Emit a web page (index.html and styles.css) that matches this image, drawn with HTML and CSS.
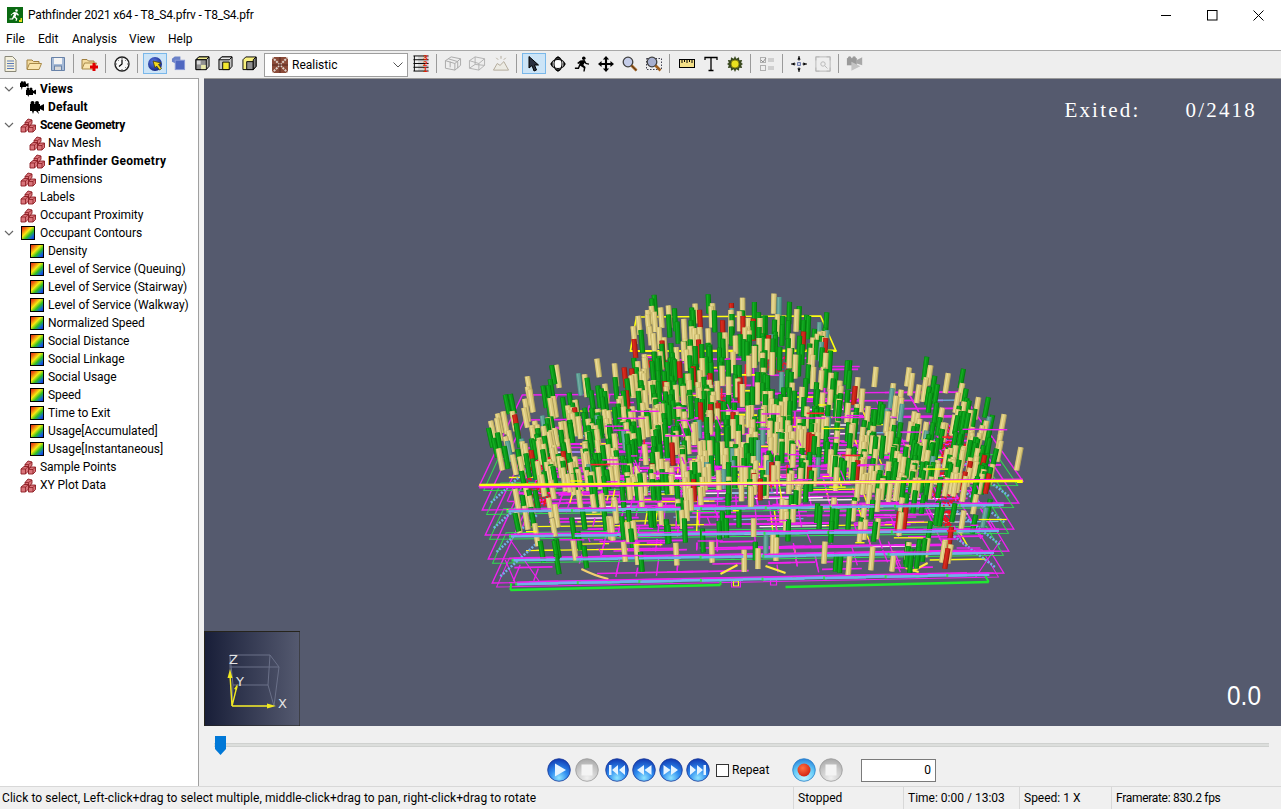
FILE: index.html
```html
<!DOCTYPE html>
<html lang="en">
<head>
<meta charset="utf-8">
<title>Pathfinder 2021 x64 - T8_S4.pfrv - T8_S4.pfr</title>
<link rel="stylesheet" href="styles.css">
</head>
<body>
<svg class="defs" width="0" height="0" aria-hidden="true">
  <defs>
    <linearGradient id="rainbow" x1="0" y1="0" x2="1" y2="1">
      <stop offset="0" stop-color="#e01010"/><stop offset=".22" stop-color="#f07010"/><stop offset=".42" stop-color="#f8e810"/><stop offset=".62" stop-color="#30c020"/><stop offset=".82" stop-color="#1060e0"/><stop offset="1" stop-color="#2020c0"/>
    </linearGradient>
    <radialGradient id="orbBlue" cx=".5" cy=".85" r=".85">
      <stop offset="0" stop-color="#8fe4ff"/><stop offset=".45" stop-color="#2f8df0"/><stop offset="1" stop-color="#1038b0"/>
    </radialGradient>
    <radialGradient id="orbGray" cx=".5" cy=".85" r=".85">
      <stop offset="0" stop-color="#f0f0f0"/><stop offset=".6" stop-color="#c8c8c8"/><stop offset="1" stop-color="#a8a8a8"/>
    </radialGradient>
    <radialGradient id="orbCyan" cx=".5" cy=".85" r=".85">
      <stop offset="0" stop-color="#c0f4ff"/><stop offset=".6" stop-color="#60c8f8"/><stop offset="1" stop-color="#2a80d8"/>
    </radialGradient>
    <radialGradient id="recRed" cx=".4" cy=".35" r=".7">
      <stop offset="0" stop-color="#ff7040"/><stop offset="1" stop-color="#d02010"/>
    </radialGradient>
    <radialGradient id="ballBlue" cx=".4" cy=".35" r=".7">
      <stop offset="0" stop-color="#5a7ae8"/><stop offset="1" stop-color="#10207a"/>
    </radialGradient>

    <symbol id="i-brick" viewBox="0 0 16 16">
      <g fill="#d8747a" stroke="#8c1c22" stroke-width=".9">
        <path d="M5 5.500 8 2l4 1v3.500l-3.500 3H5z"/>
        <path d="M1 10 4 7.500H8.500V12l-3 3H1z"/>
        <path d="M8.500 10.500 11 8h4.500v4.500L13 15H8.500z"/>
      </g>
      <g fill="none" stroke="#8c1c22" stroke-width=".8">
        <path d="M5 5.500h3.500v3M8.500 5.500 12 3M1 10h4.500v5M5.500 10l3-2.500M8.500 10.500h4.500V15M13 10.500 15.500 8"/>
      </g>
    </symbol>
    <symbol id="i-contour" viewBox="-1 -1 16 16">
      <rect x=".5" y=".5" width="13" height="13" fill="url(#rainbow)" stroke="#000"/>
    </symbol>
    <symbol id="i-cam" viewBox="0 0 16 16">
      <rect x="1" y="5" width="10" height="7" fill="#000"/><circle cx="3.500" cy="4" r="2" fill="#000"/><circle cx="8" cy="4" r="2" fill="#000"/><path d="M11 7l4-2v7l-4-2zM3 12h2l-1 3zM7 12h2l1 3z" fill="#000"/>
    </symbol>
    <symbol id="i-cams" viewBox="0 0 16 16">
      <g fill="#000"><rect x="0" y="2" width="6" height="4"/><circle cx="2" cy="1.500" r="1.300"/><circle cx="4.500" cy="1.500" r="1.300"/><path d="M6 3l2.500-1v4L6 5zM1 6h1.500l-.7 3z"/><rect x="6" y="9" width="7" height="5"/><circle cx="8" cy="8" r="1.500"/><circle cx="11" cy="8" r="1.500"/><path d="M13 10l3-1.500v5L13 12zM7.500 14H9l-.7 2z"/></g>
    </symbol>
    <symbol id="i-app" viewBox="0 0 16 16">
      <rect width="16" height="16" fill="#0a6a12"/>
      <path d="M9.500 2.200a1.300 1.300 0 1 1 0 2.600 1.300 1.300 0 0 1 0-2.600zM7 5l3 .5 2 2.500-1 .7-1.500-1.500-1 2.500 2 2-1 2.300-1-.3.500-1.700-2-1.500-1 2H2.500v-1h2.500L7 7H5.500L4.500 8.500l-1-.5z" fill="#fff"/>
      <path d="M12 15v-2h1.500v-2H15v4z" fill="#e8e020"/>
    </symbol>
    <symbol id="g-new" viewBox="0 0 16 16"><path d="M3 .5h7.500L14 4v11.500H3z" fill="#f4f0dc" stroke="#8a8878"/><path d="M5 5h7M5 7.500h7M5 10h7M5 12.500h7" stroke="#5a7ab8"/></symbol>
    <symbol id="g-open" viewBox="0 0 16 16"><path d="M1 13V4h5l1.500 1.500H13V8" fill="#f4dca0" stroke="#a08040"/><path d="M1 13.500 3.500 7.500h12L13 13.500z" fill="#fae6b0" stroke="#a88a48"/></symbol>
    <symbol id="g-save" viewBox="0 0 16 16"><path d="M1.500 1.500h13v13h-13z" fill="#a8bcd8" stroke="#6882a8"/><rect x="4" y="2" width="8" height="6" fill="#f4f4f4"/><rect x="4.500" y="10" width="7" height="4.500" fill="#d8d8d8" stroke="#6882a8"/></symbol>
    <symbol id="g-openplus" viewBox="0 0 18 16"><path d="M1 13V4h5l1.500 1.500H13V8" fill="#f4dca0" stroke="#a08040"/><path d="M1 13.500 3.500 7.500h12L13 13.500z" fill="#fae6b0" stroke="#a88a48"/><path d="M11.500 9h3v2.500H17v3h-2.500V17h-3v-2.500H9v-3h2.500z" fill="#e00000" transform="translate(0 -1.500)"/></symbol>
    <symbol id="g-clock" viewBox="0 0 16 16"><circle cx="8" cy="8" r="7" fill="#f8f8f8" stroke="#222" stroke-width="1.400"/><path d="M8 3.500V8l-3 2.500" fill="none" stroke="#000" stroke-width="1.200"/><path d="M8 2v1M14 8h-1M8 14v-1M2 8h1M12 4l-.7.7M12 12l-.7-.7M4 4l.7.7" stroke="#555"/></symbol>
    <symbol id="g-ball" viewBox="0 0 16 16"><circle cx="8" cy="8" r="7" fill="url(#ballBlue)"/><path d="M6 5l8 2-2.500 1.500 3 4-2 1.500-3-4L8 12z" fill="#f4d820" stroke="#403810" stroke-width=".8"/></symbol>
    <symbol id="g-cubeblue" viewBox="0 0 16 16"><path d="M1 3l3-2.500h6L10 6 5 8 1 6z" fill="#6b82c8"/><rect x="4.500" y="4.500" width="10" height="10" fill="#5068c0" stroke="#8a9ad8"/></symbol>
    <symbol id="g-cubeA" viewBox="0 0 16 16"><path d="M1 4 4 1h11v10l-3 3.500H1z" fill="#b0b0b0" stroke="#000"/><path d="M1 4l3-3h11l-3 3z" fill="#f0ec90" stroke="#000"/><path d="M1 4h11v10.500H1z" fill="#909090" stroke="#000"/><path d="M2 5h4v4H2z" fill="#d8d8d8"/><path d="M6.500 9.500H11.500V14H6.500z" fill="#e8e8a8"/></symbol>
    <symbol id="g-cubeB" viewBox="0 0 16 16"><path d="M1 4 4 1h11v10l-3 3.500H1z" fill="#c0c0c0" stroke="#000"/><path d="M1 4l3-3h11l-3 3z" fill="#e8e8e8" stroke="#000"/><path d="M5 6.500h7v8H5z" fill="#f4e830" stroke="#000"/></symbol>
    <symbol id="g-cubeC" viewBox="0 0 16 16"><path d="M1 4 4 1h11v10l-3 3.500H1z" fill="#f8f080" stroke="#000"/><path d="M5 6h7v8.500H5z" fill="#909090" stroke="#000"/><path d="M12 4l3-3v10l-3 3.500z" fill="#808080" stroke="#000"/></symbol>
    <symbol id="g-swatch" viewBox="0 0 16 16"><rect width="16" height="16" fill="#8a4a38"/><path d="M0 0l16 16M16 0 0 16" stroke="#e0d4cc" stroke-width="2" stroke-dasharray="2 1"/><path d="M8 0v16M0 8h16" stroke="#5a2a20"/></symbol>
    <symbol id="g-ladder" viewBox="0 0 18 18"><rect x="6" y="1" width="11" height="16" fill="#d4d4d4"/><path d="M1 1h16M1 5h16M1 9h16M1 13h16M1 17h16M2 1v16" stroke="#000" fill="none"/></symbol>
    <symbol id="g-wire" viewBox="0 0 18 18"><g fill="none" stroke="#a8a8a8"><path d="M1 6l6-4 10 2v7l-6 5-10-2z"/><path d="M1 6l10 3 6-5M11 9v7M4 4l10 3M6 13V7M14 7v7"/></g></symbol>
    <symbol id="g-wire2" viewBox="0 0 18 18"><g fill="none" stroke="#b0b0b0"><path d="M1 6l6-4 10 2v7l-6 5-10-2z"/><path d="M1 6l10 3 6-5M11 9v7M7 2v8l-6 4M7 10l10 1"/></g></symbol>
    <symbol id="g-light" viewBox="0 0 18 18"><g fill="none" stroke="#b0a898"><path d="M1 16l4-7 3 2 4-4 5 9z" fill="#ecebe4"/><path d="M9 1v3M4 3l2 2M14 3l-2 2"/></g></symbol>
    <symbol id="g-arrow" viewBox="0 0 16 16"><path d="M3 .5v11.500l3-2.500 2 5.500 2.500-1-2-5H12.500z" fill="#2a3040" stroke="#000"/></symbol>
    <symbol id="g-orbit" viewBox="0 0 18 18"><g fill="none" stroke="#000" stroke-width="1.200"><ellipse cx="9" cy="9" rx="7.500" ry="5" fill="#fff"/><ellipse cx="9" cy="9" rx="4.500" ry="7.500"/></g><path d="M9 0 6 3h6zM9 18l-3-3h6zM0 9l3-2.500v5zM18 9l-3-2.500v5z" fill="#000"/></symbol>
    <symbol id="g-run" viewBox="0 0 18 18"><circle cx="11" cy="2.500" r="2" fill="#000"/><path d="M7 5l5-.5 2 3.500 3 .5-.3 1.300L13 9l-1-1.500L10.500 10l2.500 2.500-1 5h-1.500l.5-4L7 11l-1.500 3.500H1v-1.500h3.500L6.500 8 5 9 3.500 8z" fill="#000"/></symbol>
    <symbol id="g-move" viewBox="0 0 18 18"><path d="M9 0l3.500 4H10.200v3.800H14V5.500l4 3.500-4 3.500v-2.300h-3.800V14h2.300L9 18l-3.500-4h2.300v-3.800H4v2.300L0 9l4-3.500v2.300h3.800V4H5.500z" fill="#000"/></symbol>
    <symbol id="g-zoom" viewBox="0 0 16 16"><circle cx="6" cy="6" r="4.800" fill="#c4cce8" stroke="#404040" stroke-width="1.300"/><path d="M9.500 9.500l5 5" stroke="#a06020" stroke-width="2.600"/><path d="M9.500 9.500l5 5" stroke="#202020" stroke-width=".6"/></symbol>
    <symbol id="g-zoomr" viewBox="0 0 16 16"><rect x=".5" y="2.500" width="15" height="11" fill="none" stroke="#404050" stroke-dasharray="1.500 1.500"/><circle cx="6" cy="6" r="4.800" fill="#a8b0d0" stroke="#404040" stroke-width="1.300"/><path d="M9.500 9.500l5 5" stroke="#a06020" stroke-width="2.600"/></symbol>
    <symbol id="g-ruler" viewBox="0 0 16 9"><rect x=".5" y=".5" width="15" height="8" fill="#f4e088" stroke="#000"/><path d="M3 1v3M5.500 1v2M8 1v3M10.500 1v2M13 1v3" stroke="#000"/></symbol>
    <symbol id="g-t" viewBox="0 0 16 16"><path d="M2 4V1.500h12V4M8 1.500v13M5.500 14.500h5" fill="none" stroke="#000" stroke-width="1.300"/></symbol>
    <symbol id="g-sun" viewBox="0 0 18 18"><path d="M9 0l1.500 3 3-1.500.3 3.200 3.200-.2L16 7.500 18 9l-2 1.500 1 3-3.200-.2-.3 3.200-3-1.500L9 18l-1.500-3-3 1.500-.3-3.200-3.200.2 1-3L0 9l2-1.500-1-3 3.200.2.300-3.200 3 1.500z" fill="#3a4a20"/><circle cx="9" cy="9" r="4.500" fill="#e8e020" stroke="#807810"/></symbol>
    <symbol id="g-check" viewBox="0 0 16 16"><g fill="none" stroke="#b0b0b0"><rect x="1.500" y="1.500" width="5" height="5"/><rect x="1.500" y="9.500" width="5" height="5"/><path d="M9 3h6M9 5h6M9 11h6M9 13h6"/></g><path d="M2 4l2 2 3-4" stroke="#909090" fill="none"/></symbol>
    <symbol id="g-cross" viewBox="0 0 18 18"><path d="M9 0v5M9 13v5M0 9h5M13 9h5" stroke="#000" stroke-width="1.200"/><path d="M9 1l-2 3h4zM9 17l-2-3h4zM1 9l3-2v4zM17 9l-3-2v4z" fill="#000"/><rect x="7.500" y="7.500" width="3" height="3" fill="none" stroke="#5060a0"/></symbol>
    <symbol id="g-frame" viewBox="0 0 18 18"><g fill="none" stroke="#b4b4b4"><path d="M1 5V1h4M13 1h4v4M17 13v4h-4M5 17H1v-4"/><rect x="1" y="1" width="16" height="16"/><circle cx="9" cy="9" r="2.500"/><path d="M11 11l3 3"/></g></symbol>
    <symbol id="g-camoff" viewBox="0 0 20 18"><rect x="1" y="3" width="11" height="8" fill="#9a9a9a"/><circle cx="4" cy="3" r="2" fill="#9a9a9a"/><circle cx="9" cy="3" r="2" fill="#9a9a9a"/><path d="M12 5l6-3v9l-6-2z" fill="#a8a8a8"/><path d="M6 7l10 5-10 5z" fill="#c4c4c4"/></symbol>

    <symbol id="o-play" viewBox="0 0 24 24"><circle cx="12" cy="12" r="11.300" fill="url(#orbBlue)" stroke="#1a3a98" stroke-width=".8"/><path d="M8 5.500 19 12 8 18.500z" fill="#e6f4ff"/></symbol>
    <symbol id="o-stop" viewBox="0 0 24 24"><circle cx="12" cy="12" r="11.300" fill="url(#orbGray)" stroke="#9a9a9a" stroke-width=".8"/><rect x="6.500" y="6.500" width="11" height="11" fill="#f4f4f4"/></symbol>
    <symbol id="o-first" viewBox="0 0 24 24"><circle cx="12" cy="12" r="11.300" fill="url(#orbBlue)" stroke="#1a3a98" stroke-width=".8"/><path d="M4 7h2.500v10H4zM7 12l6-5v10zM14 12l6-5v10z" fill="#e6f4ff"/></symbol>
    <symbol id="o-prev" viewBox="0 0 24 24"><circle cx="12" cy="12" r="11.300" fill="url(#orbBlue)" stroke="#1a3a98" stroke-width=".8"/><path d="M5 12l7-5v10zM12.500 12l7-5v10z" fill="#e6f4ff"/></symbol>
    <symbol id="o-next" viewBox="0 0 24 24"><circle cx="12" cy="12" r="11.300" fill="url(#orbBlue)" stroke="#1a3a98" stroke-width=".8"/><path d="M19 12l-7-5v10zM11.500 12l-7-5v10z" fill="#e6f4ff"/></symbol>
    <symbol id="o-last" viewBox="0 0 24 24"><circle cx="12" cy="12" r="11.300" fill="url(#orbBlue)" stroke="#1a3a98" stroke-width=".8"/><path d="M20 7h-2.500v10H20zM17 12l-6-5v10zM10 12l-6-5v10z" fill="#e6f4ff"/></symbol>
    <symbol id="o-rec" viewBox="0 0 24 24"><circle cx="12" cy="12" r="11.300" fill="url(#orbCyan)" stroke="#2a80c8" stroke-width=".8"/><circle cx="12" cy="12" r="6.500" fill="url(#recRed)"/></symbol>
  </defs>
</svg>

<div class="window">
  <header class="titlebar">
    <svg class="app-icon"><use href="#i-app"/></svg>
    <span class="title">Pathfinder 2021 x64 - T8_S4.pfrv - T8_S4.pfr</span>
    <div class="winctl">
      <span class="winbtn"><svg width="11" height="11" viewBox="0 0 11 11"><path d="M0 5.500h10" stroke="#000"/></svg></span>
      <span class="winbtn"><svg width="11" height="11" viewBox="0 0 11 11"><rect x=".5" y=".5" width="9.500" height="9.500" fill="none" stroke="#000"/></svg></span>
      <span class="winbtn"><svg width="11" height="11" viewBox="0 0 11 11"><path d="M.5.500l10 10M10.500.500l-10 10" stroke="#000" fill="none"/></svg></span>
    </div>
  </header>

  <nav class="menubar">
    <span class="menu-item m-file">File</span><span class="menu-item m-edit">Edit</span><span class="menu-item m-analysis">Analysis</span><span class="menu-item m-view">View</span><span class="menu-item">Help</span>
  </nav>

  <div class="toolbar">
    <span class="tb tb-first"><svg class="g16"><use href="#g-new"/></svg></span>
    <span class="tb"><svg class="g16"><use href="#g-open"/></svg></span>
    <span class="tb"><svg class="g16"><use href="#g-save"/></svg></span>
    <span class="sep"></span>
    <span class="tb"><svg class="g18"><use href="#g-openplus"/></svg></span>
    <span class="sep"></span>
    <span class="tb"><svg class="g16"><use href="#g-clock"/></svg></span>
    <span class="sep sep-wide"></span>
    <span class="tb tb-on"><svg class="g16"><use href="#g-ball"/></svg></span>
    <span class="tb tb-tight"><svg class="g14"><use href="#g-cubeblue"/></svg></span>
    <span class="tb tb-tight"><svg class="g14"><use href="#g-cubeA"/></svg></span>
    <span class="tb tb-tight"><svg class="g14"><use href="#g-cubeB"/></svg></span>
    <span class="tb tb-tight"><svg class="g14"><use href="#g-cubeC"/></svg></span>
    <div class="combo">
      <svg class="g16"><use href="#g-swatch"/></svg>
      <span class="combo-text">Realistic</span>
      <svg class="combo-caret" width="10" height="6" viewBox="0 0 10 6"><path d="M.5.500 5 5 9.500.500" fill="none" stroke="#555"/></svg>
    </div>
    <span class="tb ladder">
      <svg class="g18"><use href="#g-ladder"/></svg>
      <span class="ladder-nums">321</span>
    </span>
    <span class="sep"></span>
    <span class="tb"><svg class="g18"><use href="#g-wire"/></svg></span>
    <span class="tb"><svg class="g18"><use href="#g-wire2"/></svg></span>
    <span class="tb"><svg class="g18"><use href="#g-light"/></svg></span>
    <span class="sep sep-wide"></span>
    <span class="tb tb-on"><svg class="g16"><use href="#g-arrow"/></svg></span>
    <span class="tb"><svg class="g16"><use href="#g-orbit"/></svg></span>
    <span class="tb"><svg class="g16"><use href="#g-run"/></svg></span>
    <span class="tb"><svg class="g16"><use href="#g-move"/></svg></span>
    <span class="tb"><svg class="g16"><use href="#g-zoom"/></svg></span>
    <span class="tb"><svg class="g16"><use href="#g-zoomr"/></svg></span>
    <span class="sep sep-wide"></span>
    <span class="tb"><svg class="g-ruler"><use href="#g-ruler"/></svg></span>
    <span class="tb"><svg class="g16"><use href="#g-t"/></svg></span>
    <span class="tb"><svg class="g16"><use href="#g-sun"/></svg></span>
    <span class="sep"></span>
    <span class="tb"><svg class="g16"><use href="#g-check"/></svg></span>
    <span class="sep"></span>
    <span class="tb"><svg class="g16"><use href="#g-cross"/></svg></span>
    <span class="tb"><svg class="g16"><use href="#g-frame"/></svg></span>
    <span class="sep"></span>
    <span class="tb"><svg class="g18"><use href="#g-camoff"/></svg></span>
  </div>

  <div class="workspace">
    <aside class="tree">
      <div class="row"><svg class="chev"><path d="M1 1l4 4 4-4" fill="none" stroke="#666" stroke-width="1.200"/></svg><svg class="ico"><use href="#i-cams"/></svg><b>Views</b></div>
      <div class="row lvl1"><svg class="ico"><use href="#i-cam"/></svg><b>Default</b></div>
      <div class="row"><svg class="chev"><path d="M1 1l4 4 4-4" fill="none" stroke="#666" stroke-width="1.200"/></svg><svg class="ico"><use href="#i-brick"/></svg><b class="b-tight">Scene Geometry</b></div>
      <div class="row lvl1"><svg class="ico"><use href="#i-brick"/></svg>Nav Mesh</div>
      <div class="row lvl1"><svg class="ico"><use href="#i-brick"/></svg><b class="b-wide">Pathfinder Geometry</b></div>
      <div class="row lvl0"><svg class="ico"><use href="#i-brick"/></svg>Dimensions</div>
      <div class="row lvl0"><svg class="ico"><use href="#i-brick"/></svg>Labels</div>
      <div class="row lvl0"><svg class="ico"><use href="#i-brick"/></svg>Occupant Proximity</div>
      <div class="row"><svg class="chev"><path d="M1 1l4 4 4-4" fill="none" stroke="#666" stroke-width="1.200"/></svg><svg class="ico"><use href="#i-contour"/></svg>Occupant Contours</div>
      <div class="row lvl1"><svg class="ico"><use href="#i-contour"/></svg>Density</div>
      <div class="row lvl1"><svg class="ico"><use href="#i-contour"/></svg>Level of Service (Queuing)</div>
      <div class="row lvl1"><svg class="ico"><use href="#i-contour"/></svg>Level of Service (Stairway)</div>
      <div class="row lvl1"><svg class="ico"><use href="#i-contour"/></svg>Level of Service (Walkway)</div>
      <div class="row lvl1"><svg class="ico"><use href="#i-contour"/></svg>Normalized Speed</div>
      <div class="row lvl1"><svg class="ico"><use href="#i-contour"/></svg>Social Distance</div>
      <div class="row lvl1"><svg class="ico"><use href="#i-contour"/></svg>Social Linkage</div>
      <div class="row lvl1"><svg class="ico"><use href="#i-contour"/></svg>Social Usage</div>
      <div class="row lvl1"><svg class="ico"><use href="#i-contour"/></svg>Speed</div>
      <div class="row lvl1"><svg class="ico"><use href="#i-contour"/></svg>Time to Exit</div>
      <div class="row lvl1"><svg class="ico"><use href="#i-contour"/></svg>Usage[Accumulated]</div>
      <div class="row lvl1"><svg class="ico"><use href="#i-contour"/></svg>Usage[Instantaneous]</div>
      <div class="row lvl0"><svg class="ico"><use href="#i-brick"/></svg>Sample Points</div>
      <div class="row lvl0"><svg class="ico"><use href="#i-brick"/></svg>XY Plot Data</div>
    </aside>

    <main class="stage">
      <div class="viewport">
        <svg id="scene" class="scene" viewBox="204 79 1076 646" preserveAspectRatio="none"></svg>
        <div class="exited"><span>Exited:</span><span>0/2418</span></div>
        <div class="clock">0.0</div>
        <svg class="axes" viewBox="0 0 96 95">
          <defs><linearGradient id="axbg"><stop offset="0" stop-color="#181e38"/><stop offset="1" stop-color="#555a70"/></linearGradient></defs>
          <rect x=".5" y=".5" width="95.500" height="94.500" fill="url(#axbg)" stroke="#26241c"/>
          <g fill="none" stroke="#6a7088">
            <path d="M26 24h40l-2 30H29zM26 36h49l-5 39H28zM26 24v12M66 24l9 12M64 54l6 21M29 54l-1 21"/>
          </g>
          <g stroke="#f0e820" stroke-width="1.400" fill="#f0e820">
            <path d="M28 75 26 44M28 75h40M28 75l5-20" fill="none"/>
            <path d="M26 38l-2.500 9h5zM72 75l-9-2.500v5zM33.500 53l-3.500 5 3 1z" stroke="none"/>
          </g>
          <text class="ax" x="25" y="33">Z</text>
          <text class="ax" x="32" y="55">Y</text>
          <text class="ax" x="74" y="77">X</text>
        </svg>
      </div>

      <div class="controls">
        <div class="slider"><span class="thumb"></span></div>
        <div class="transport">
          <svg class="orb"><use href="#o-play"/></svg>
          <svg class="orb orb-g4"><use href="#o-stop"/></svg>
          <svg class="orb orb-g6"><use href="#o-first"/></svg>
          <svg class="orb orb-g3"><use href="#o-prev"/></svg>
          <svg class="orb orb-g3"><use href="#o-next"/></svg>
          <svg class="orb orb-g3"><use href="#o-last"/></svg>
          <span class="check"></span>
          <span class="check-label">Repeat</span>
          <svg class="orb orb-rec"><use href="#o-rec"/></svg>
          <svg class="orb orb-g3"><use href="#o-stop"/></svg>
          <input class="frame-input" value="0" readonly>
        </div>
      </div>
    </main>
  </div>

  <footer class="statusbar">
    <span class="cell cell-msg">Click to select, Left-click+drag to select multiple, middle-click+drag to pan, right-click+drag to rotate</span>
    <span class="cell cell-state">Stopped</span>
    <span class="cell cell-time">Time: 0:00 / 13:03</span>
    <span class="cell cell-speed">Speed: 1 X</span>
    <span class="cell cell-fps">Framerate: 830.2 fps</span>
  </footer>
</div>
<script src="scene.js"></script>
</body>
</html>
```
FILE: styles.css
```css
* { box-sizing: border-box; }
html, body { margin: 0; height: 100%; overflow: hidden; }
body { font: 12px/1 Roboto, "Noto Sans", sans-serif; color: #000; background: #f0f0f0; }
.defs { position: absolute; }
.window { display: flex; flex-direction: column; height: 809px; width: 1281px; }
svg { display: block; flex: none; }

.titlebar { height: 30px; background: #fff; display: flex; align-items: center; padding-left: 7px; flex: none; }
.app-icon { width: 16px; height: 16px; }
.title { margin-left: 5px; white-space: nowrap; letter-spacing: -.2px; }
.winctl { margin-left: auto; display: flex; }
.winbtn { width: 46px; height: 30px; display: flex; align-items: center; justify-content: center; }

.menubar { height: 21px; background: #fff; border-bottom: 1px solid #a8a8a8; display: flex; padding: 0 0 2px 6px; align-items: center; flex: none; }
.menu-item { flex: none; }
.m-file { width: 32px; }
.m-edit { width: 34px; }
.m-analysis { width: 57px; }
.m-view { width: 39px; }

.toolbar { height: 27px; background: #eeeeee; display: flex; align-items: flex-start; padding-top: 2px; flex: none; }
.tb { width: 24px; height: 21px; display: flex; align-items: center; justify-content: center; flex: none; border: 1px solid transparent; position: relative; }
.tb-first { width: 22px; justify-content: flex-start; padding-left: 1px; }
.tb-tight { width: 23.5px; }
.tb-on { background: #cce4f7; border-color: #7ab8ea; }
.sep { width: 8px; height: 19px; margin-top: 1px; flex: none; position: relative; }
.sep::after { content: ""; position: absolute; left: 3px; top: 0; bottom: 0; width: 1px; background: #9a9a9a; }
.sep-wide { width: 9px; }
.g16 { width: 16px; height: 16px; }
.g14 { width: 15px; height: 15px; }
.g18 { width: 18px; height: 17px; }
.g-ruler { width: 16px; height: 9px; }
.combo { width: 144px; height: 24px; margin-left: 3px; margin-right: 1px; background: #fff; border: 1px solid #9e9e9e; display: flex; align-items: center; padding-left: 7px; flex: none; }
.combo-text { margin-left: 4px; }
.combo-caret { margin-left: auto; margin-right: 4px; }
.ladder-nums { position: absolute; right: 3px; top: 1px; color: #e82000; font: 700 8px/6px "Liberation Sans", sans-serif; width: 6px; word-break: break-all; }

.workspace { flex: 1; display: flex; min-height: 0; }
.tree { width: 199px; background: #fff; border-right: 1px solid #a0a0a0; border-top: 1px solid #a0a0a0; padding-top: 1px; flex: none; letter-spacing: -.06px; }
.row { height: 18px; display: flex; align-items: center; white-space: nowrap; padding-left: 4px; position: relative; }
.row b { font-weight: 700; letter-spacing: .1px; }
.row .b-tight { letter-spacing: -.3px; }
.row .b-wide { letter-spacing: .3px; }
.chev { width: 10px; height: 6px; margin-right: 6px; }
.lvl0 { padding-left: 20px; }
.lvl1 { padding-left: 29px; }
.ico { width: 16px; height: 16px; margin-right: 4px; }
.lvl1 .ico { margin-right: 3px; }
.row .ico { flex: none; }

.stage { flex: 1; display: flex; flex-direction: column; padding-left: 5px; min-width: 0; }
.viewport { height: 648px; margin-left: 0; position: relative; background: #555a6e; border-top: 1px solid #9a9a9a; overflow: hidden; }
.scene { width: 100%; height: 646px; position: absolute; left: 0; top: 0; }
.exited { position: absolute; top: 19px; right: 24px; display: flex; gap: 45px; color: #fff; font: 21px/24px "Liberation Serif", serif; letter-spacing: 2.2px; }
.clock { position: absolute; right: 20px; top: 600px; color: #fff; font: 400 28px/34px "Liberation Sans", sans-serif; transform: scaleX(.87); transform-origin: right center; }
.axes { position: absolute; left: 0; bottom: 0; width: 96px; height: 95px; }
.ax { fill: #e4e4e4; font: 13px "DejaVu Sans", sans-serif; }

.controls { flex: 1; margin-left: -5px; background: #f0f0f0; }
.slider { height: 4px; margin: 17px 12px 0 15px; background: #dcdedc; border-top: 1px solid #cfd1cf; border-bottom: 1px solid #cfd1cf; position: relative; }
.thumb { position: absolute; left: 1px; top: -8px; width: 11px; height: 19px; background: #0078d7; clip-path: polygon(0 0, 100% 0, 100% 68%, 50% 100%, 0 68%); }
.transport { display: flex; align-items: center; padding-left: 348px; margin-top: 11px; height: 24px; }
.orb { width: 24px; height: 24px; }
.orb-g3 { margin-left: 3px; }
.orb-g4 { margin-left: 4px; }
.orb-g6 { margin-left: 6px; }
.orb-rec { margin-left: 23px; }
.check { width: 13px; height: 13px; border: 1px solid #333; background: #fff; margin-left: 6px; flex: none; }
.check-label { margin-left: 3px; width: 37px; flex: none; }
.frame-input { width: 75px; height: 23px; margin-left: 18px; border: 1px solid #7a7a7a; background: #fff; text-align: right; padding: 0 4px; font: 12px Roboto, sans-serif; outline: none; }

.statusbar { height: 23px; display: flex; flex: none; background: #f0f0f0; border-top: 1px solid #d8d8d8; }
.cell { display: flex; align-items: center; height: 100%; white-space: nowrap; padding-left: 4px; border-left: 1px solid #d8d8d8; flex: none; }
.cell-msg { width: 793px; padding-left: 2px; border-left: 0; letter-spacing: .07px; }
.cell-state { width: 110px; }
.cell-time { width: 116px; }
.cell-speed { width: 92px; }
.cell-fps { width: 170px; letter-spacing: -.3px; }
```
FILE: scene.js
```js
(function () {
  var seed = 20210;
  function rnd() {
    seed |= 0; seed = seed + 0x6D2B79F5 | 0;
    var t = Math.imul(seed ^ seed >>> 15, 1 | seed);
    t = t + Math.imul(t ^ t >>> 7, 61 | t) ^ t;
    return ((t ^ t >>> 14) >>> 0) / 4294967296;
  }
  function r(a, b) { return a + (b - a) * rnd(); }
  function f(n) { return n.toFixed(1); }
  var out = [];
  function line(x1, y1, x2, y2, c, w, extra) {
    out.push('<line x1="' + f(x1) + '" y1="' + f(y1) + '" x2="' + f(x2) + '" y2="' + f(y2) + '" stroke="' + c + '" stroke-width="' + w + '"' + (extra || '') + '/>');
  }
  function poly(pts, c, w) {
    out.push('<polygon fill="none" points="' + pts.map(function (p) { return f(p[0]) + ',' + f(p[1]); }).join(' ') + '" stroke="' + c + '" stroke-width="' + w + '"/>');
  }

  var MAG = '#f020f0', GRN = '#30e050', YEL = '#ffff10', BLU = '#70b0e8';
  var floors = [
    { nl: [492, 583], nr: [1003, 573], fl: [530, 500], fr: [955, 495] },
    { nl: [488, 559], nr: [1008, 551], fl: [528, 472], fr: [958, 468] },
    { nl: [485, 535], nr: [1013, 529], fl: [526, 448], fr: [960, 444] },
    { nl: [482, 510], nr: [1018, 503], fl: [524, 420], fr: [960, 416] },
    { nl: [479, 486], nr: [1022, 481], fl: [522, 395], fr: [960, 392] }
  ];
  function P(fl, u, v) {
    var ax = fl.nl[0] + (fl.nr[0] - fl.nl[0]) * u, ay = fl.nl[1] + (fl.nr[1] - fl.nl[1]) * u;
    var bx = fl.fl[0] + (fl.fr[0] - fl.fl[0]) * u, by = fl.fl[1] + (fl.fr[1] - fl.fl[1]) * u;
    return [ax + (bx - ax) * v, ay + (by - ay) * v];
  }

  floors.forEach(function (fl, i) {
    poly([P(fl, 0, 0), P(fl, 1, 0), P(fl, 1, 1), P(fl, 0, 1)], MAG, 1.4);
    poly([P(fl, .012, -.05), P(fl, .985, -.05), P(fl, .985, .3), P(fl, .012, .3)], i === 0 ? MAG : GRN, 1);
    var n = 60 + i * 10;
    for (var k = 0; k < n; k++) {
      var v = Math.round(r(0, 11)) / 11, u1 = r(.03, .9), u2 = u1 + r(.04, .2);
      var a = P(fl, u1, v), b = P(fl, Math.min(u2, .98), v);
      var roll = rnd();
      line(a[0], a[1], b[0], b[1], roll < .7 ? MAG : roll < .84 ? YEL : roll < .92 ? BLU : '#fff0f8', roll < .7 ? 1.7 : 1.3);
    }
    for (var m = 0; m < n * .8; m++) {
      var uu = Math.round(r(1, 24)) / 25, v1 = r(0, .8), v2 = v1 + r(.08, .3);
      var c = P(fl, uu, v1), d = P(fl, uu, Math.min(v2, 1));
      line(c[0], c[1], d[0], d[1], rnd() < .85 ? MAG : YEL, 1.4);
    }
  });

  line(510, 590, 720, 585, '#20e830', 2.4);
  line(510, 590, 511, 583, '#20e830', 2);
  line(720, 585, 720, 578, '#20e830', 2);
  line(785, 587, 988, 582, '#20e830', 2.4);
  line(988, 582, 984, 575, '#20e830', 2);
  poly([[733, 581], [738, 581], [738, 586], [733, 586]], YEL, 1.2);
  poly([[731, 579], [740, 579], [740, 587], [731, 587]], MAG, 1);
  poly([[770, 580], [776, 580], [776, 585], [770, 585]], MAG, 1.2);

  out.push('<path d="M581 569 Q595 576 608 579" fill="none" stroke="#f4d070" stroke-width="2"/>');
  out.push('<path d="M720 574 L737 565" fill="none" stroke="#ffe840" stroke-width="2"/>');
  out.push('<path d="M765 566 L785 573" fill="none" stroke="#ffe840" stroke-width="2"/>');
  out.push('<path d="M905 568 L918 572" fill="none" stroke="#ffe840" stroke-width="2"/>');
  out.push('<path d="M912 571 L927 563" fill="none" stroke="#ffe840" stroke-width="2"/>');
  out.push('<path d="M515 583 L505 560 M540 583 L510 540 M975 577 L1000 540" fill="none" stroke="' + MAG + '" stroke-width="1.200"/>');

  poly([[636, 317], [820, 316], [835, 350], [630, 351]], YEL, 1.6);
  line(630, 351, 836, 351, YEL, 2);
  for (var tw = 0; tw < 110; tw++) {
    var tx = r(640, 830), ty = r(355, 480), tl = r(8, 40);
    var pick = rnd();
    if (pick < .5) line(tx, ty, tx + tl, ty, pick < .35 ? MAG : YEL, 1.7);
    else line(tx, ty, tx, ty + tl * .6, pick < .8 ? MAG : '#ff2030', 1.7);
  }

  floors.slice(0, 4).forEach(function (fl) {
    var a = P(fl, 0.015, -.02), b = P(fl, .985, -.02);
    var a2 = [a[0] + 30, a[1] - 1];
    line(a2[0], a2[1], b[0] - 30, b[1], BLU, 3);
    line(a2[0], a2[1] - 2, b[0] - 30, b[1] - 2, MAG, 1.2);
    for (var u = .05; u < .95; u += .06) {
      var p = P(fl, u, -.02);
      line(p[0] - 2, p[1] - .2, p[0] + 2, p[1] - .2, GRN, 3);
    }
    var s = P(fl, 0.01, .08), e = P(fl, .06, .5);
    line(s[0], s[1], e[0], e[1], BLU, 2.5, ' stroke-dasharray="2 1.500"');
    var s2 = P(fl, .99, .08), e2 = P(fl, .94, .5);
    line(s2[0], s2[1], e2[0], e2[1], BLU, 2.5, ' stroke-dasharray="2 1.500"');
  });

  function patch(x0, y0, x1, y1, n) {
    var s = '';
    for (var i = 0; i < n; i++) {
      s += 'M' + f(r(x0, x1)) + ' ' + f(r(y0, y1)) + 'h1.600v1.600h-1.600z';
    }
    out.push('<path d="' + s + '" fill="#f01020"/>');
  }
  patch(528, 452, 552, 470, 220);
  patch(522, 478, 552, 506, 180);
  patch(645, 360, 672, 368, 70);
  patch(760, 355, 790, 372, 70);
  patch(940, 425, 965, 462, 180);
  patch(930, 468, 960, 505, 120);
  patch(936, 510, 950, 525, 70);
  patch(700, 395, 725, 410, 60);

  var topPts = [[488, 402], [505, 392], [522, 358], [560, 356], [600, 352], [628, 345], [640, 298], [680, 282], [760, 280], [820, 288], [832, 345], [870, 358], [920, 354], [960, 358], [985, 398], [1016, 418]];
  function topAt(x) {
    for (var i = 1; i < topPts.length; i++) {
      if (x <= topPts[i][0]) {
        var a = topPts[i - 1], b = topPts[i];
        return a[1] + (b[1] - a[1]) * (x - a[0]) / (b[0] - a[0]);
      }
    }
    return topPts[topPts.length - 1][1];
  }
  var people = [];
  function add(x, y, kind) { people.push({ x: x, y: y, k: kind }); }
  function pickKind() {
    var q = rnd();
    return q < .47 ? 0 : q < .935 ? 1 : q < .97 ? 2 : 3;
  }
  var placed = 0;
  while (placed < 880) {
    var x = r(492, 1016), tp = topAt(x);
    var edge = x < 525 ? .28 : x > 985 ? .28 : 1;
    var bottom = (x < 515 || x > 990) ? 450 : 482;
    var y = r(tp, Math.max(bottom, tp + 10));
    var nearTop = Math.min((y - tp) / 60, 1);
    if (rnd() > edge * (.1 + .9 * nearTop)) continue;
    add(x, y, pickKind());
    placed++;
  }
  for (var tt = 0; tt < 170; tt++) { add(r(642, 828), r(305, 470), pickKind()); }
  for (var j = 0; j < 100; j++) { add(r(515, 990), r(482, 522), pickKind()); }
  for (var l = 0; l < 42; l++) { add(r(535, 965), r(522, 556), pickKind()); }
  people.sort(function (a, b) { return a.y - b.y; });
  var cols = [
    ['#b2a35c', '#dcca7c', '#ece0a0'],
    ['#067a10', '#0a9c18', '#18b028'],
    ['#981810', '#c82418', '#e03020'],
    ['#40807a', '#5e9e94', '#78b4a8']
  ];
  people.forEach(function (p) {
    var lean = (p.x - 750) / 270 * 4.5, len = r(18, 24), w = p.k === 0 ? 5.6 : 5.2;
    var x1 = p.x + lean, y1 = p.y, x2 = p.x, y2 = p.y + len, c = cols[p.k];
    line(x1, y1, x2, y2, c[0], w);
    line(x1 - .4, y1, x2 - .4, y2, c[1], w - 1.4);
    line(x1 - .8, y1 + .5, x2 - .8, y2, c[2], .9);
  });

  for (var w1 = 0; w1 < 80; w1++) {
    var wx = r(520, 985), wy = r(395, 560), wl = r(6, 30), pk = rnd();
    if (pk < .55) line(wx, wy, wx + wl, wy, MAG, 1.4);
    else if (pk < .8) line(wx, wy, wx + wl * .2, wy + wl * .5, MAG, 1.3);
    else if (pk < .93) line(wx, wy, wx + wl, wy, YEL, 1.3);
    else line(wx, wy, wx + wl, wy, '#ff2030', 1.6);
  }

  line(479, 487, 1022, 480, MAG, 3);
  line(479, 485, 1022, 481, YEL, 2.4);
  line(640, 484, 900, 482, '#fff2a0', 1.2);
  floors.slice(0, 4).forEach(function (fl) {
    for (var u = .05; u < .92; u += .12) {
      var a = P(fl, u, -.02), b = P(fl, u + .08, -.02);
      line(a[0], a[1] - 2, b[0], b[1] - 2, MAG, 1.4);
      line(a[0], a[1], b[0], b[1], BLU, 2.4);
    }
  });

  document.getElementById('scene').innerHTML = out.join('');
})();
```
